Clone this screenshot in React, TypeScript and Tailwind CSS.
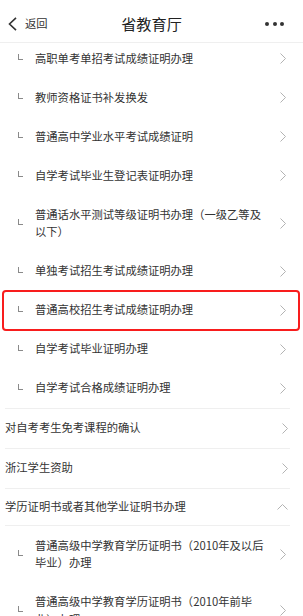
import React from "react";

const Chevron = () => (
  <svg width="6" height="11" viewBox="0 0 6 11" fill="none">
    <polyline points="0.5,0.5 5.5,5.5 0.5,10.5" stroke="#b3b3b3" strokeWidth="1" />
  </svg>
);

const ChevronUp = () => (
  <svg width="11" height="6" viewBox="0 0 11 6" fill="none">
    <polyline points="0.5,5.5 5.5,0.5 10.5,5.5" stroke="#b3b3b3" strokeWidth="1" />
  </svg>
);

type Sub = { text: string; highlight?: boolean };

const SubRow = ({ text, highlight }: Sub) => (
  <div className="relative flex items-center py-[10.75px]">
    <div className="w-[30px] shrink-0 pl-[13px] flex items-center">
      <div className="w-[5px] h-[6px] border-l border-b border-[#8a8a8a] -mt-[3px]" />
    </div>
    <div className="flex-1 leading-[17.5px] text-[#333] [text-spacing-trim:space-all]">{text}</div>
    <div className="w-[20px] shrink-0 flex justify-end pr-[4px]">
      <Chevron />
    </div>
    {highlight && (
      <div className="absolute -left-[3px] -right-[10px] -top-[1px] -bottom-[1px] border-2 border-[#f81d1d] rounded-[4px]" />
    )}
  </div>
);

const TopRow = ({ text, open }: { text: string; open?: boolean }) => (
  <div className={`flex items-center border-t border-[#efefef] ${open ? "py-[9.5px]" : "py-[10.75px]"}`}>
    <div className="flex-1 leading-[17.5px] text-[#333]">{text}</div>
    <div className="w-[20px] shrink-0 flex justify-end pr-[2px]">
      {open ? <ChevronUp /> : <Chevron />}
    </div>
  </div>
);

export default function App() {
  const subs1: Sub[] = [
    { text: "高职单考单招考试成绩证明办理" },
    { text: "教师资格证书补发换发" },
    { text: "普通高中学业水平考试成绩证明" },
    { text: "自学考试毕业生登记表证明办理" },
    { text: "普通话水平测试等级证明书办理（一级乙等及以下）" },
    { text: "单独考试招生考试成绩证明办理" },
    { text: "普通高校招生考试成绩证明办理", highlight: true },
    { text: "自学考试毕业证明办理" },
    { text: "自学考试合格成绩证明办理" },
  ];
  const subs2: Sub[] = [
    { text: "普通高级中学教育学历证明书（2010年及以后毕业）办理" },
    { text: "普通高级中学教育学历证明书（2010年前毕业）办理" },
  ];
  return (
    <div
      className="w-[303px] h-[616px] bg-white overflow-hidden flex flex-col text-[11.3px]"
      style={{ fontFamily: '"Noto Sans CJK SC", "Noto Sans", sans-serif' }}
    >
      <div className="relative z-10 h-[43px] shrink-0 bg-white border-b border-[#efefef] flex items-center pt-[6px] px-[8px]">
        <div className="flex items-center gap-[8px] w-[80px]">
          <svg width="9" height="14" viewBox="0 0 9 14" fill="none">
            <polyline points="8,0.8 1.5,7 8,13.2" stroke="#333" strokeWidth="1.6" />
          </svg>
          <span className="text-[11.3px] text-[#333] leading-none">返回</span>
        </div>
        <div className="flex-1 text-center text-[15.2px] text-[#222] leading-none">省教育厅</div>
        <div className="w-[80px] flex justify-end items-center gap-[3.5px] pr-[11px]">
          <span className="w-[4px] h-[4px] rounded-full bg-[#333]" />
          <span className="w-[4px] h-[4px] rounded-full bg-[#333]" />
          <span className="w-[4px] h-[4px] rounded-full bg-[#333]" />
        </div>
      </div>
      <div className="flex-1 overflow-hidden">
        <div className="-mt-[4px] ml-[5px] mr-[13px]">
          {subs1.map((s) => (
            <SubRow key={s.text} {...s} />
          ))}
          <TopRow text="对自考考生免考课程的确认" />
          <TopRow text="浙江学生资助" />
          <TopRow text="学历证明书或者其他学业证明书办理" open />
          <div className="border-t border-[#efefef]">
            {subs2.map((s) => (
              <SubRow key={s.text} {...s} />
            ))}
          </div>
        </div>
      </div>
    </div>
  );
}
